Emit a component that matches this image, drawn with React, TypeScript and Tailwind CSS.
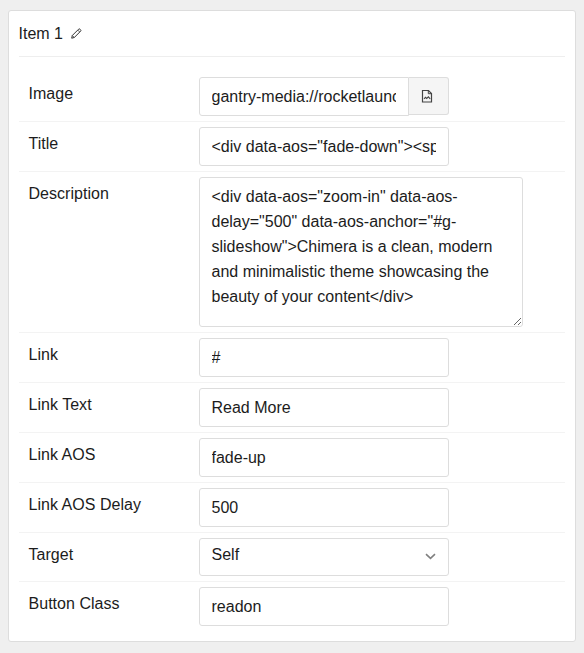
import type { ReactNode } from "react";

const control =
  "block rounded-[3px] border border-[#dddddd] bg-white pl-[11.5px] pr-3 text-base text-[#1c1c1c] outline-none";

function Row({
  label,
  last = false,
  children,
}: {
  label: string;
  last?: boolean;
  children: ReactNode;
}) {
  return (
    <div className={`flex items-start py-[5px] pl-[9.5px] ${last ? "" : "border-b border-[#f3f3f3]"}`}>
      <span className="w-[170.5px] shrink-0 pt-[5px] leading-6 tracking-[0.03px] text-[#1c1c1c]">{label}</span>
      {children}
    </div>
  );
}

function TextField({ value }: { value: string }) {
  return <input type="text" defaultValue={value} className={`${control} h-[39px] w-[250px]`} />;
}

function PencilIcon() {
  return (
    <svg width="11" height="11" viewBox="0 0 11 11" fill="none" stroke="#333" strokeWidth="1" strokeLinejoin="round">
      <path d="M0.7 10.2 1.3 7.5 7.6 1.2Q8.3 0.5 9 1.2L9.6 1.8Q10.3 2.5 9.6 3.2L3.3 9.5Z" />
      <path d="M6.8 2.1 8.7 4M1.3 7.5 3.3 9.5" strokeWidth="0.8" />
    </svg>
  );
}

function ImageFileIcon() {
  return (
    <svg width="12" height="14" viewBox="0 0 12 14" fill="none" stroke="#444" strokeWidth="1.2">
      <path d="M1.5 1.5H7.5L10.5 4.5V13H1.5Z" />
      <path d="M7.3 1.5V4.7H10.5" strokeWidth="1" />
      <path d="M3 9.8 4.5 8.3 5.7 9.4 7.4 7.8 9.2 9.8" strokeWidth="1.1" />
    </svg>
  );
}

export default function App() {
  return (
    <div className="h-[653px] w-[584px] bg-[#efefef] px-2 pt-[10px] font-['Liberation_Sans',Arial,sans-serif] text-base">
      <section className="h-[632px] w-[568px] rounded-[3px] border border-[#dddddd] bg-white px-[10px]">
        <header className="flex h-[46px] items-center border-b border-[#eeeeee] text-[#1c1c1c]">
          <h4 className="-ml-[0.5px] leading-6">Item 1</h4>
          <button className="ml-2" aria-label="Edit title">
            <PencilIcon />
          </button>
        </header>
        <div className="pt-[15px]">
          <Row label="Image">
            <div className="flex items-start">
              <input
                type="text"
                defaultValue="gantry-media://rocketlauncher/home/slideshow/img-01.jpg"
                className={`${control} h-[39px] w-[210px] rounded-r-none`}
              />
              <button
                aria-label="Pick image"
                className="flex h-[38px] w-10 items-center justify-center rounded-r-[3px] border border-l-0 border-[#dddddd] bg-[#f5f5f5] pr-[3px]"
              >
                <ImageFileIcon />
              </button>
            </div>
          </Row>
          <Row label="Title">
            <TextField value={'<div data-aos="fade-down"><span>Chimera</span></div>'} />
          </Row>
          <Row label="Description">
            <textarea
              defaultValue={
                '<div data-aos="zoom-in" data-aos-delay="500" data-aos-anchor="#g-slideshow">Chimera is a clean, modern and minimalistic theme showcasing the beauty of your content</div>'
              }
              className={`${control} h-[150px] w-[324px] resize py-[6px] leading-[25px]`}
            />
          </Row>
          <Row label="Link">
            <TextField value="#" />
          </Row>
          <Row label="Link Text">
            <TextField value="Read More" />
          </Row>
          <Row label="Link AOS">
            <TextField value="fade-up" />
          </Row>
          <Row label="Link AOS Delay">
            <TextField value="500" />
          </Row>
          <Row label="Target">
            <div className={`${control} flex! h-[38px] w-[250px] items-start justify-between`}>
              <span className="pt-1 leading-6">Self</span>
              <svg className="mt-[14px]" width="11" height="8" viewBox="0 0 11 8" fill="none" stroke="#808080" strokeWidth="1.6">
                <path d="M1 1.2 5.5 5.4 10 1.2" />
              </svg>
            </div>
          </Row>
          <Row label="Button Class" last>
            <TextField value="readon" />
          </Row>
        </div>
      </section>
    </div>
  );
}
